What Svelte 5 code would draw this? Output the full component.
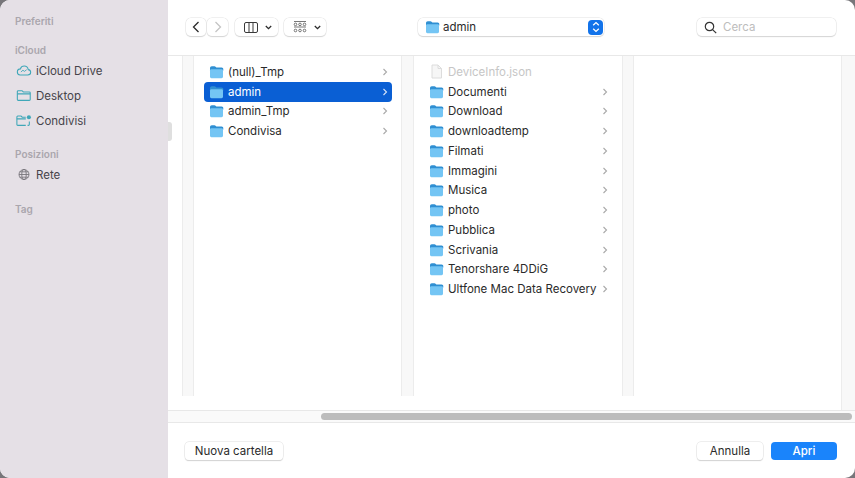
<script>
	const rootFolders = [
		{ name: '(null)_Tmp' },
		{ name: 'admin', selected: true },
		{ name: 'admin_Tmp' },
		{ name: 'Condivisa' }
	];
	const adminFolders = [
		'Documenti',
		'Download',
		'downloadtemp',
		'Filmati',
		'Immagini',
		'Musica',
		'photo',
		'Pubblica',
		'Scrivania',
		'Tenorshare 4DDiG',
		'Ultfone Mac Data Recovery'
	];
</script>

{#snippet folder()}
	<svg class="folder" width="15" height="14" viewBox="0 0 15 14">
		<path d="M1 3.200C1 2 1.700 1.200 2.800 1.200h2.600c.7 0 1 .2 1.400.7l.6.7h5.200c1.100 0 1.700.7 1.700 1.800v1.200H1z" fill="#2f8fd2" />
		<rect x="1" y="4.200" width="13" height="9" rx="1.400" fill="#74c5f4" />
	</svg>
{/snippet}

{#snippet chevron()}
	<svg class="chev" width="6" height="8" viewBox="0 0 6 8">
		<path d="M1.500 1l3 3-3 3" fill="none" stroke="currentColor" stroke-width="1.100" />
	</svg>
{/snippet}

<div class="dialog">
	<aside class="sidebar">
		<h4 class="first">Preferiti</h4>
		<h4 class="cloud">iCloud</h4>
		<div class="place">
			<svg width="16" height="13" viewBox="0 0 18 14" fill="none" stroke="#3fa7b8" stroke-width="1.200">
				<path d="M4.600 12h8.600c2 0 3.300-1.300 3.300-3 0-1.600-1.100-2.800-2.700-3C13.300 3.600 11.500 2 9.300 2 7.200 2 5.500 3.300 5 5.200 2.900 5.300 1.500 6.800 1.500 8.700 1.500 10.600 2.800 12 4.600 12z" />
				<path d="M5.500 8.700l2.300-2 1.700 1.300 2.500-1.900" stroke-width="1" />
			</svg>
			<span>iCloud Drive</span>
		</div>
		<div class="place">
			<svg width="16" height="13" viewBox="0 0 18 14" fill="none" stroke="#3fa7b8" stroke-width="1.200">
				<path d="M2.500 12.500h12.500a1 1 0 0 0 1-1V4a1 1 0 0 0-1-1H8.200L6.800 1.600H2.500a1 1 0 0 0-1 1v8.900a1 1 0 0 0 1 1z" />
				<path d="M1.500 5.200h14.500" />
			</svg>
			<span>Desktop</span>
		</div>
		<div class="place">
			<svg width="16" height="13" viewBox="0 0 18 14" fill="none" stroke="#3fa7b8" stroke-width="1.200">
				<path d="M11 12.500H2a1 1 0 0 1-1-1V3a1 1 0 0 1 1-1h3.700l1.300 1.300h4" />
				<path d="M1 5.200h10" />
				<path d="M13 12.500h1a1 1 0 0 0 1-1V8" />
				<circle cx="14.500" cy="3.300" r="2.300" fill="#3fa7b8" stroke="none" />
			</svg>
			<span>Condivisi</span>
		</div>
		<h4 class="places">Posizioni</h4>
		<div class="place">
			<svg width="16" height="13" viewBox="0 0 18 14" fill="none" stroke="#77747a" stroke-width="1">
				<circle cx="9" cy="7" r="5.600" />
				<ellipse cx="9" cy="7" rx="2.500" ry="5.600" />
				<path d="M3.400 7h11.200M4.200 4h9.600M4.200 10h9.600" />
			</svg>
			<span>Rete</span>
		</div>
		<h4 class="tags">Tag</h4>
	</aside>

	<main class="content">
		<span class="grip"></span>

		<header class="toolbar">
			<div class="nav">
				<button class="tool back" aria-label="Indietro">
					<svg width="8" height="12" viewBox="0 0 8 12"><path d="M6.500 1L1.500 6l5 5" fill="none" stroke="#2b2b2b" stroke-width="1.300" /></svg>
				</button>
				<button class="tool fwd" aria-label="Avanti">
					<svg width="8" height="12" viewBox="0 0 8 12"><path d="M1.500 1l5 5-5 5" fill="none" stroke="#c4c4c4" stroke-width="1.300" /></svg>
				</button>
			</div>
			<button class="tool view" aria-label="Vista">
				<svg width="14" height="11" viewBox="0 0 14 11" fill="none" stroke="#3a3a3a" stroke-width="1">
					<rect x="0.500" y="0.500" width="13" height="10" rx="1.500" />
					<path d="M5 .5v10M9 .5v10" />
				</svg>
				<svg width="7" height="5" viewBox="0 0 7 5"><path d="M.8 1l2.700 2.700L6.200 1" fill="none" stroke="#2b2b2b" stroke-width="1.300" /></svg>
			</button>
			<button class="tool group" aria-label="Raggruppa">
				<svg width="14" height="12" viewBox="0 0 14 12" fill="none" stroke="#555" stroke-width="0.800">
					<path d="M1 .5h12M1 6h12" />
					<circle cx="2.500" cy="3.400" r="1.300" />
					<circle cx="7" cy="3.400" r="1.300" />
					<circle cx="11.500" cy="3.400" r="1.300" />
					<circle cx="2.500" cy="9.500" r="1.300" />
					<circle cx="7" cy="9.500" r="1.300" />
					<circle cx="11.500" cy="9.500" r="1.300" />
				</svg>
				<svg width="7" height="5" viewBox="0 0 7 5"><path d="M.8 1l2.700 2.700L6.200 1" fill="none" stroke="#2b2b2b" stroke-width="1.300" /></svg>
			</button>
			<div class="tool path">
				{@render folder()}
				<span class="label">admin</span>
				<span class="stepper">
					<svg width="8" height="12" viewBox="0 0 8 12" fill="none" stroke="#fff" stroke-width="1.300">
						<path d="M1.200 4.300L4 1.600l2.800 2.700M1.200 7.700L4 10.400l2.800-2.700" />
					</svg>
				</span>
			</div>
			<div class="tool search">
				<svg width="13" height="13" viewBox="0 0 13 13" fill="none" stroke="#333" stroke-width="1.200">
					<circle cx="5.500" cy="5.500" r="4.200" />
					<path d="M8.600 8.600l3.600 3.600" />
				</svg>
				<span>Cerca</span>
			</div>
		</header>

		<section class="browser">
			<div class="stub"></div>
			<div class="strip"></div>
			<ul class="column">
				{#each rootFolders as item}
					<li class="row" class:selected={item.selected}>
						{@render folder()}
						<span class="name">{item.name}</span>
						{@render chevron()}
					</li>
				{/each}
			</ul>
			<div class="strip wide"></div>
			<ul class="column second">
				<li class="row disabled">
					<svg class="folder" width="15" height="15" viewBox="0 0 15 15" fill="#f6f6f6" stroke="#dcdcdc" stroke-width="1">
						<path d="M3 1h6l3.500 3.500V14H3z" />
						<path d="M9 1v3.500h3.500" fill="none" />
					</svg>
					<span class="name">DeviceInfo.json</span>
				</li>
				{#each adminFolders as name}
					<li class="row">
						{@render folder()}
						<span class="name">{name}</span>
						{@render chevron()}
					</li>
				{/each}
			</ul>
			<div class="strip"></div>
			<div class="column"></div>
			<div class="strip last"></div>
		</section>

		<div class="hscroll"><span class="thumb"></span></div>

		<footer class="footer">
			<button class="btn new">Nuova cartella</button>
			<div class="actions">
				<button class="btn cancel">Annulla</button>
				<button class="btn open">Apri</button>
			</div>
		</footer>
	</main>
</div>

<style>
	:global(body) {
		background: #77767a;
		overflow: hidden;
	}
	.dialog {
		width: 855px;
		height: 478px;
		display: grid;
		grid-template-columns: 168px 1fr;
		border-radius: 10px;
		overflow: hidden;
		background: #fff;
		font-family: Inter, 'Liberation Sans', sans-serif;
		font-size: 11.500px;
		color: #2a2a2a;
	}
	button {
		font: inherit;
		color: inherit;
		padding: 0;
	}

	/* sidebar */
	.sidebar {
		background: #e5e0e6;
		padding-left: 15px;
		display: flex;
		flex-direction: column;
		align-items: flex-start;
	}
	h4 {
		margin: 0;
		font-size: 10px;
		line-height: 14px;
		font-weight: 600;
		color: #aaa6ad;
	}
	.first {
		margin-top: 14px;
	}
	.cloud {
		margin-top: 15px;
		margin-bottom: 1px;
	}
	.places {
		margin-top: 14px;
		margin-bottom: 1px;
	}
	.tags {
		margin-top: 15px;
	}
	.place {
		height: 25px;
		display: flex;
		align-items: center;
		gap: 4px;
		margin-left: 1px;
		color: #46444a;
		font-size: 11.500px;
	}
	.place svg {
		flex: none;
	}

	/* right side */
	.content {
		position: relative;
		display: flex;
		flex-direction: column;
		min-width: 0;
	}
	.grip {
		position: absolute;
		left: 0;
		top: 122px;
		width: 4px;
		height: 19px;
		background: #dfdfdf;
		border-radius: 0 3px 3px 0;
	}

	.toolbar {
		height: 56px;
		flex: none;
		box-sizing: border-box;
		border-bottom: 1px solid #e8e8e8;
		display: flex;
		align-items: center;
		padding-left: 18px;
		padding-bottom: 1px;
	}
	.tool {
		height: 18px;
		flex: none;
		box-sizing: border-box;
		background: #fff;
		border: 0;
		border-radius: 5px;
		box-shadow: 0 0 0 0.5px #e2e2e2, 0 1px 1px #c9c9c9;
		display: flex;
		align-items: center;
	}
	.nav {
		display: flex;
		gap: 1px;
		flex: none;
	}
	.back {
		width: 20px;
		justify-content: center;
	}
	.fwd {
		width: 21px;
		justify-content: center;
	}
	.view {
		width: 43px;
		margin-left: 7px;
		padding-left: 9px;
		gap: 7px;
	}
	.group {
		width: 42px;
		margin-left: 6px;
		padding-left: 9px;
		gap: 7px;
	}
	.path {
		width: 186px;
		margin-left: 92px;
		padding: 0 1px 0 7px;
		gap: 3px;
	}
	.label {
		flex: 1;
	}
	.stepper {
		width: 15px;
		height: 15px;
		flex: none;
		background: #1273ea;
		border-radius: 4px;
		display: flex;
		align-items: center;
		justify-content: center;
	}
	.search {
		width: 139px;
		margin-left: 93px;
		padding-left: 7px;
		gap: 6px;
		color: #bdbdbd;
	}

	/* column browser */
	.browser {
		flex: 1;
		min-height: 0;
		display: flex;
	}
	.stub {
		width: 14px;
		flex: none;
	}
	.strip {
		width: 12px;
		flex: none;
		margin-bottom: 14px;
		box-sizing: border-box;
		background: #f8f8f8;
		border-left: 1px solid #ececec;
		border-right: 1px solid #ececec;
	}
	.strip.wide {
		width: 13px;
	}
	.strip.last {
		width: 14px;
		margin-bottom: 0;
		border-right: 0;
	}
	.column {
		width: 207px;
		flex: none;
		margin: 0;
		padding: 6px 9px 0 10px;
		box-sizing: border-box;
		list-style: none;
	}
	.second {
		width: 208px;
		padding-right: 10px;
	}
	.row {
		height: 19.750px;
		display: flex;
		align-items: center;
		gap: 4px;
		padding: 0 4px 0 5px;
		border-radius: 4px;
		white-space: nowrap;
	}
	.name {
		flex: 1;
	}
	.folder {
		flex: none;
	}
	.chev {
		flex: none;
		color: #a9a9a9;
	}
	.row.selected {
		background: #0a5fd4;
		color: #fff;
	}
	.row.selected .chev {
		color: #d5e3f8;
	}
	.row.disabled {
		color: #c6c6c6;
	}

	.hscroll {
		height: 13px;
		flex: none;
		box-sizing: border-box;
		background: #fafafa;
		border-top: 1px solid #e8e8e8;
		border-bottom: 1px solid #e8e8e8;
		display: flex;
		align-items: center;
		padding-left: 153px;
		padding-right: 3px;
	}
	.thumb {
		flex: 1;
		height: 7px;
		background: #bcbcbc;
		border-radius: 4px;
	}

	/* footer */
	.footer {
		height: 55px;
		flex: none;
		display: flex;
		align-items: center;
		justify-content: space-between;
		padding: 1px 18px 0 17px;
		box-sizing: border-box;
	}
	.actions {
		display: flex;
		gap: 8px;
	}
	.btn {
		height: 18px;
		border: 0;
		border-radius: 4px;
		background: #fff;
		box-shadow: 0 0 0 0.5px #dedede, 0 1px 1px #c9c9c9;
	}
	.new {
		width: 98px;
	}
	.cancel,
	.open {
		width: 66px;
	}
	.open {
		background: #1a84fb;
		color: #fff;
		font-weight: 500;
		box-shadow: none;
	}
</style>
